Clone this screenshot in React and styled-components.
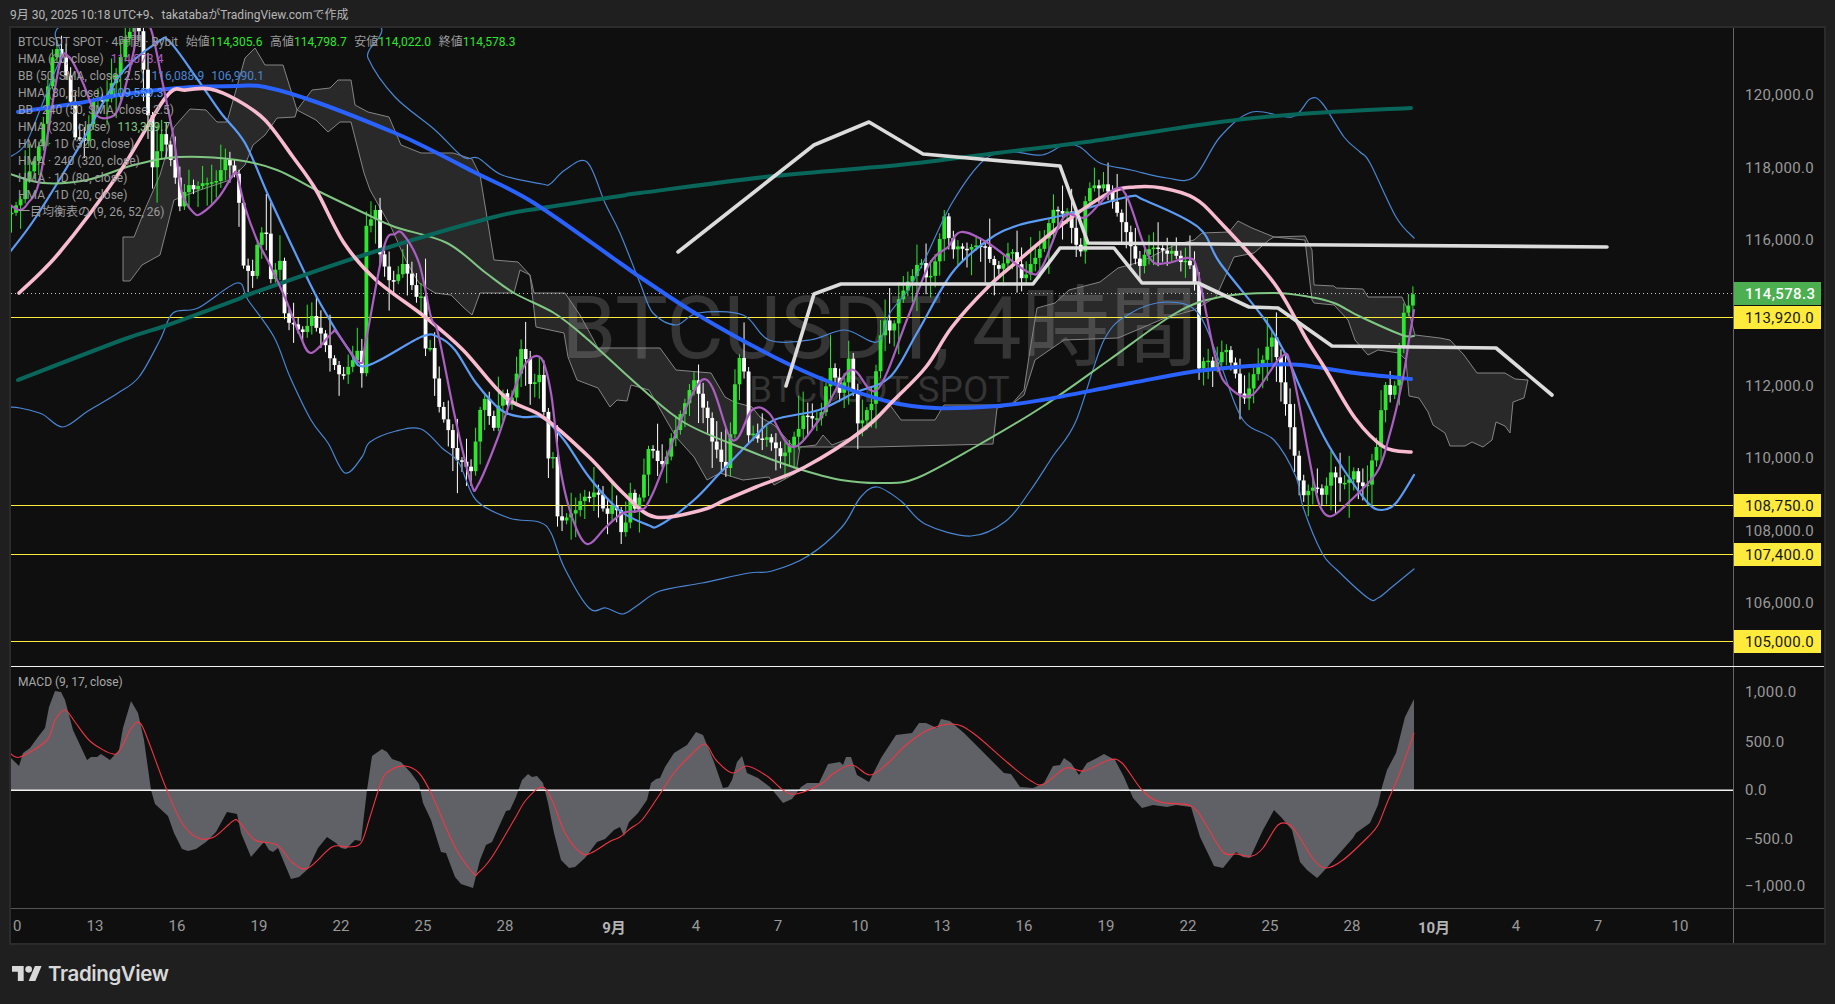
import React from "react";
import styled, { createGlobalStyle } from "styled-components";

const GlobalStyle = createGlobalStyle`
  html, body {
    margin: 0;
    height: 100%;
    background: #1f1f1f;
    overflow: hidden;
  }
`;

const fontStack = `Roboto, "Noto Sans CJK JP", sans-serif`;

const Page = styled.div`
  width: 1835px;
  height: 1004px;
  display: flex;
  flex-direction: column;
  background: #1f1f1f;
  font-family: ${fontStack};
`;

const Header = styled.div`
  height: 26px;
  padding-left: 10px;
  display: flex;
  align-items: center;
  color: #b8b8b8;
  font-size: 12px;
  white-space: nowrap;
`;

const Frame = styled.div`
  width: 1817px;
  margin-left: 9px;
  box-sizing: border-box;
  border: 2px solid #2b2b2b;
  background: #0f0f0f;
  display: flex;
  flex-direction: column;
`;

const MainRow = styled.div`
  display: flex;
  height: 638px;
`;

const Separator = styled.div`
  height: 1px;
  background: #f2f2f2;
`;

const MacdRow = styled.div`
  display: flex;
  height: 241px;
`;

const TimeRow = styled.div`
  display: flex;
  height: 34px;
  border-top: 1px solid #565656;
`;

const Plot = styled.div`
  position: relative;
  width: 1722px;
  flex: none;
  overflow: hidden;
`;

const ChartSvg = styled.svg`
  position: relative;
  display: block;
`;

const PriceAxis = styled.div`
  position: relative;
  flex: 1;
  border-left: 1px solid #666;
`;

const Tick = styled.div`
  position: absolute;
  left: 0;
  width: 87px;
  height: 23px;
  box-sizing: border-box;
  padding-left: 11px;
  display: flex;
  align-items: center;
  font-size: 15px;
  letter-spacing: 0.35px;
  color: ${(p) => p.$color || "#9a9a9a"};
  background: ${(p) => p.$bg || "transparent"};
  font-weight: ${(p) => (p.$strong ? 500 : 400)};
`;

const TimeAxis = styled.div`
  width: 1722px;
  flex: none;
  display: flex;
  align-items: center;
  overflow: hidden;
`;

const TimeTick = styled.div`
  flex: 0 0 ${(p) => p.$w}px;
  margin-left: ${(p) => p.$offset || 0}px;
  text-align: center;
  font-size: 15px;
  color: ${(p) => (p.$strong ? "#b4b4b4" : "#9a9a9a")};
  font-weight: ${(p) => (p.$strong ? 700 : 400)};
`;

const AxisCorner = styled.div`
  flex: 1;
  border-left: 1px solid #666;
`;

const Legend = styled.div`
  position: absolute;
  left: 7px;
  top: 6px;
  display: flex;
  flex-direction: column;
  font-size: 12px;
  color: #9c9c9c;
`;

const LegendRow = styled.div`
  height: 17px;
  line-height: 17px;
  white-space: nowrap;
  display: flex;
  gap: ${(p) => p.$gap || 7}px;
`;

const Value = styled.span`
  color: ${(p) => p.$color};
`;

const MacdLegend = styled.div`
  position: absolute;
  left: 7px;
  top: 8px;
  font-size: 12px;
  color: #a8a8a8;
`;

const Watermark = styled.div`
  position: absolute;
  left: 553px;
  top: 256px;
  width: 631px;
  display: flex;
  flex-direction: column;
  align-items: center;
  color: rgba(255, 255, 255, 0.16);
  white-space: nowrap;
`;

const WatermarkTitle = styled.div`
  font-size: 88px;
  line-height: 88px;
`;

const WatermarkSub = styled.div`
  font-size: 37px;
  line-height: 36px;
`;

const Footer = styled.div`
  flex: 1;
  display: flex;
  align-items: center;
  gap: 6px;
  padding: 0 0 2px 12px;
`;

const Brand = styled.span`
  font-family: Inter, sans-serif;
  font-size: 20.5px;
  font-weight: 600;
  letter-spacing: -0.4px;
  color: #d8d8d8;
`;

// ---- traced data, page coordinates ----

const toPoints = (flat) => {
  const out = [];
  for (let i = 0; i < flat.length; i += 2) out.push([flat[i], flat[i + 1]]);
  return out;
};

const straight = (pts) =>
  pts.map((p, i) => `${i ? "L" : "M"}${p[0]} ${p[1]}`).join(" ");

const smooth = (pts) => {
  let d = `M${pts[0][0]} ${pts[0][1]}`;
  for (let i = 0; i < pts.length - 1; i++) {
    const a = pts[Math.max(i - 1, 0)];
    const b = pts[i];
    const c = pts[i + 1];
    const e = pts[Math.min(i + 2, pts.length - 1)];
    const c1x = b[0] + (c[0] - a[0]) / 6;
    const c1y = b[1] + (c[1] - a[1]) / 6;
    const c2x = c[0] - (e[0] - b[0]) / 6;
    const c2y = c[1] - (e[1] - b[1]) / 6;
    d += ` C${c1x.toFixed(1)} ${c1y.toFixed(1)} ${c2x.toFixed(1)} ${c2y.toFixed(1)} ${c[0]} ${c[1]}`;
  }
  return d;
};

const teal = toPoints([18,380, 122,340, 168,325, 236,300, 253,293, 364,255, 490,218, 542,208, 620,196, 640,193, 774,176, 899,165, 997,153, 1086,142, 1220,122, 1300,114, 1411,108]);
const blue = toPoints([18,112, 79,103, 119,95, 178,88, 237,86, 265,87, 316,102, 395,133, 435,152, 474,172, 534,203, 620,263, 640,277, 698,315, 774,357, 832,383, 890,402, 935,408, 997,406, 1042,400, 1131,383, 1198,371, 1265,365, 1301,365, 1355,373, 1411,379]);
const pink = toPoints([19,293, 59,253, 119,173, 166,97, 186,90, 210,89, 237,100, 265,120, 293,157, 316,190, 344,243, 376,280, 425,317, 463,350, 505,397, 543,417, 589,457, 623,493, 655,517, 702,510, 725,500, 756,487, 805,467, 863,430, 894,400, 926,367, 952,327, 988,287, 1019,260, 1064,223, 1109,193, 1135,187, 1162,188, 1194,198, 1220,222, 1274,283, 1307,340, 1326,370, 1355,418, 1384,447, 1411,452]);
const basis = toPoints([10,252, 36,217, 79,147, 120,75, 158,42, 170,42, 198,80, 221,113, 245,143, 269,197, 300,263, 320,303, 349,350, 366,366, 421,337, 438,337, 455,350, 476,383, 501,410, 522,417, 543,418, 564,440, 589,477, 619,510, 648,525, 660,525, 694,500, 720,473, 752,440, 774,420, 819,410, 854,393, 890,377, 917,333, 952,273, 988,240, 1019,225, 1064,215, 1127,197, 1144,200, 1198,227, 1220,263, 1265,320, 1287,357, 1300,387, 1324,437, 1344,470, 1368,503, 1382,510, 1396,503, 1414,475]);
const upper = toPoints([10,157, 25,145, 40,110, 60,60, 83,20, 360,20, 368,58, 395,97, 435,130, 463,157, 478,158, 502,175, 542,184, 550,184, 565,170, 587,162, 605,203, 620,233, 640,283, 653,313, 676,325, 698,313, 743,315, 769,340, 810,340, 845,330, 877,342, 890,313, 908,290, 926,257, 952,203, 984,160, 1011,152, 1042,155, 1064,145, 1080,147, 1100,163, 1131,170, 1167,178, 1194,177, 1220,137, 1252,112, 1292,117, 1310,99, 1322,103, 1344,137, 1360,152, 1370,163, 1396,217, 1414,238]);
const lower = toPoints([10,407, 20,408, 42,414, 63,427, 88,411, 118,393, 139,377, 160,340, 173,313, 198,308, 237,283, 248,300, 274,337, 290,377, 311,420, 328,443, 345,473, 362,457, 370,442, 396,431, 421,429, 442,448, 459,463, 476,500, 509,518, 539,522, 551,533, 564,567, 589,608, 606,608, 623,614, 638,605, 660,591, 702,583, 749,573, 772,571, 808,556, 842,527, 860,498, 877,487, 901,501, 925,524, 971,536, 1006,521, 1030,491, 1053,456, 1076,421, 1104,340, 1131,313, 1167,302, 1198,313, 1220,363, 1243,420, 1274,440, 1296,477, 1303,507, 1322,553, 1337,570, 1368,598, 1378,598, 1392,587, 1414,569]);
const green = toPoints([10,174, 43,183, 87,180, 134,165, 178,157, 237,160, 277,170, 316,190, 364,213, 395,227, 447,243, 486,273, 514,293, 554,313, 585,337, 640,387, 685,423, 747,450, 796,468, 841,480, 885,483, 917,478, 975,447, 1042,407, 1109,360, 1176,313, 1220,297, 1274,293, 1310,297, 1334,303, 1361,317, 1402,335, 1414,336]);
const whiteA = toPoints([678,252, 814,145, 869,122, 923,154, 1060,166, 1088,243, 1340,245, 1607,247]);
const whiteB = toPoints([786,386, 814,294, 841,284, 1033,284, 1060,248, 1114,248, 1142,283, 1198,283, 1249,307, 1278,308, 1332,346, 1496,348, 1552,395]);
const purple = toPoints([10,205, 20,210, 28,203, 40,178, 59,67, 69,57, 83,83, 95,113, 107,118, 119,107, 134,50, 136,27, 150,27, 162,80, 174,140, 182,193, 194,213, 202,213, 219,197, 233,175, 237,175, 245,207, 257,240, 269,263, 286,300, 299,333, 311,353, 332,333, 337,333, 360,363, 366,340, 384,247, 395,234, 403,234, 419,263, 431,317, 438,333, 455,417, 471,483, 478,485, 497,440, 513,393, 526,363, 541,358, 551,393, 560,467, 572,517, 587,544, 606,527, 623,513, 640,510, 653,493, 702,380, 732,440, 752,410, 769,413, 792,447, 819,420, 850,370, 877,390, 908,317, 930,263, 948,247, 961,232, 988,243, 1028,272, 1042,267, 1064,217, 1086,217, 1113,190, 1127,197, 1149,257, 1167,263, 1189,258, 1198,273, 1216,360, 1229,387, 1252,395, 1281,357, 1292,370, 1314,483, 1322,510, 1332,516, 1348,503, 1377,472, 1389,437, 1402,383, 1409,340, 1414,310]);

const cloudTop = toPoints([123,237, 134,237, 146,207, 160,175, 174,127, 190,109, 206,110, 217,122, 227,122, 245,58, 255,48, 265,65, 283,65, 297,110, 312,90, 330,88, 338,80, 351,80, 355,105, 368,112, 389,117, 401,145, 421,153, 453,153, 472,159, 480,175, 494,260, 518,262, 530,275, 534,293, 565,293, 580,315, 598,348, 660,348, 676,370, 711,373, 725,397, 734,402, 752,407, 760,417, 774,425, 792,445, 800,447, 816,445, 823,435, 832,445, 850,438, 890,405, 901,420, 935,420, 944,405, 997,405, 1011,405, 1024,390, 1030,350, 1037,308, 1055,303, 1069,290, 1100,282, 1118,268, 1140,262, 1175,245, 1194,240, 1202,233, 1229,232, 1238,221, 1252,228, 1274,237, 1305,236, 1312,250, 1314,285, 1334,286, 1336,288, 1363,289, 1368,297, 1402,297, 1409,313, 1415,335, 1440,338, 1450,340, 1464,355, 1477,373, 1505,373, 1515,379, 1528,380]);
const cloudBottom = toPoints([123,281, 130,281, 142,265, 160,255, 174,200, 200,190, 230,180, 245,165, 253,145, 265,135, 277,118, 295,117, 297,110, 316,120, 328,132, 340,122, 351,122, 364,173, 370,190, 391,227, 407,263, 419,283, 435,293, 451,295, 463,307, 472,315, 480,293, 514,293, 520,270, 530,275, 536,327, 564,333, 568,357, 577,380, 598,388, 610,407, 617,400, 627,401, 631,385, 649,390, 676,437, 694,457, 707,480, 720,473, 743,480, 769,477, 774,485, 796,473, 800,447, 816,447, 872,447, 993,444, 997,408, 1011,405, 1024,395, 1035,360, 1064,340, 1118,338, 1144,327, 1165,318, 1194,310, 1216,297, 1234,257, 1254,253, 1269,240, 1274,237, 1305,240, 1312,300, 1314,303, 1334,305, 1348,320, 1355,340, 1368,355, 1378,350, 1399,353, 1406,360, 1409,396, 1419,398, 1428,412, 1433,425, 1445,433, 1450,446, 1465,446, 1472,442, 1483,447, 1492,440, 1496,422, 1505,426, 1510,433, 1513,402, 1524,398, 1528,380]);

const closePath = toPoints([11,213, 20,205, 24,183, 40,147, 51,60, 59,50, 69,83, 73,133, 87,140, 93,100, 105,100, 119,67, 127,33, 138,27, 146,93, 152,167, 162,133, 174,173, 180,207, 186,187, 214,183, 223,163, 233,163, 241,217, 241,267, 253,273, 259,233, 269,233, 271,283, 281,260, 285,323, 304,333, 312,317, 341,380, 358,350, 362,375, 364,230, 378,207, 380,257, 391,283, 403,263, 413,290, 423,300, 424,363, 428,332, 438,403, 442,415, 450,433, 455,455, 461,465, 465,463, 473,472, 478,420, 483,395, 488,408, 492,432, 497,413, 501,388, 509,413, 513,397, 520,347, 524,353, 532,390, 538,367, 543,393, 546,458, 556,457, 556,517, 564,520, 570,517, 581,500, 587,500, 598,490, 606,518, 614,500, 619,520, 624,547, 629,480, 633,513, 642,488, 649,447, 662,467, 680,417, 694,377, 707,417, 711,443, 727,467, 738,352, 747,377, 747,433, 760,437, 774,440, 778,457, 787,453, 805,412, 819,420, 827,385, 832,363, 841,397, 850,352, 856,430, 872,400, 883,320, 892,330, 899,300, 919,260, 930,282, 944,218, 952,250, 984,247, 997,270, 1013,250, 1022,280, 1042,247, 1053,213, 1069,213, 1073,240, 1082,253, 1086,187, 1104,185, 1122,220, 1129,240, 1138,270, 1144,253, 1162,247, 1178,257, 1194,270, 1197,368, 1205,357, 1211,370, 1227,348, 1243,400, 1258,367, 1272,337, 1278,367, 1287,410, 1298,477, 1305,497, 1311,483, 1315,490, 1324,495, 1329,473, 1334,474, 1343,483, 1355,473, 1360,483, 1368,483, 1373,458, 1378,447, 1384,380, 1388,392, 1392,392, 1397,383, 1401,320, 1405,305, 1410,303, 1414,293]);

const closeAt = (x) => {
  const pts = closePath;
  if (x <= pts[0][0]) return pts[0][1];
  for (let i = 1; i < pts.length; i++) {
    if (x <= pts[i][0]) {
      const a = pts[i - 1];
      const b = pts[i];
      return a[1] + ((b[1] - a[1]) * (x - a[0])) / (b[0] - a[0] || 1);
    }
  }
  return pts[pts.length - 1][1];
};

// seeded so the wicks stay the same from run to run
const makeRng = (seed) => () => {
  seed = (seed * 1664525 + 1013904223) % 4294967296;
  return seed / 4294967296;
};

const buildCandles = () => {
  const rng = makeRng(20250930);
  const list = [];
  let prev = closeAt(11);
  for (let x = 11.5; x <= 1414.5; x += 4.55) {
    const close = closeAt(x) + (rng() - 0.5) * 7;
    const top = Math.min(prev, close);
    const bottom = Math.max(prev, close);
    list.push({
      x,
      up: close < prev,
      top,
      height: Math.max(bottom - top, 1.5),
      high: top - 3 - rng() * rng() * 36,
      low: bottom + 3 + rng() * rng() * 36,
    });
    prev = close;
  }
  return list;
};

const candles = buildCandles();

const macdArea = toPoints([10,757, 19,766, 23,753, 30,748, 38,737, 45,728, 49,707, 55,691, 61,692, 65,700, 73,730, 87,760, 91,757, 97,757, 101,754, 110,760, 119,750, 123,728, 131,701, 138,713, 144,740, 151,790, 155,804, 168,816, 174,833, 182,849, 188,851, 196,849, 206,842, 216,832, 227,812, 237,814, 241,833, 251,857, 264,842, 269,850, 273,852, 278,848, 291,879, 299,877, 308,869, 318,848, 327,837, 336,843, 341,848, 346,849, 355,840, 361,841, 367,790, 372,756, 382,749, 387,752, 392,759, 401,762, 411,773, 419,784, 423,803, 431,820, 441,852, 446,853, 455,877, 461,884, 473,888, 480,860, 486,845, 492,842, 506,811, 510,810, 516,797, 522,780, 528,774, 532,777, 537,776, 543,783, 548,803, 554,833, 561,860, 569,868, 575,867, 585,858, 597,842, 605,839, 614,830, 620,827, 624,836, 629,822, 638,813, 647,800, 651,783, 656,779, 660,778, 665,767, 674,753, 687,745, 696,732, 703,735, 714,762, 723,788, 728,787, 732,780, 737,762, 742,756, 747,773, 758,778, 770,787, 783,803, 792,799, 801,787, 807,783, 819,783, 828,764, 840,762, 843,765, 846,757, 851,757, 857,775, 869,782, 881,758, 896,735, 912,733, 919,723, 926,723, 937,728, 941,719, 950,721, 964,733, 986,755, 1004,773, 1011,774, 1020,787, 1033,788, 1040,785, 1044,783, 1053,766, 1060,765, 1064,758, 1071,763, 1079,775, 1087,763, 1095,759, 1104,754, 1115,760, 1124,777, 1133,798, 1142,808, 1153,805, 1167,807, 1176,805, 1191,807, 1200,837, 1214,866, 1223,868, 1236,852, 1243,857, 1250,858, 1263,830, 1274,810, 1281,817, 1292,830, 1300,862, 1307,870, 1317,878, 1322,873, 1338,855, 1353,838, 1356,833, 1370,823, 1378,805, 1382,787, 1387,770, 1396,753, 1405,717, 1414,699, 1414,790, 10,790]);
const macdSignal = toPoints([10,753, 20,757, 47,740, 55,720, 65,710, 75,722, 91,742, 113,754, 121,748, 132,727, 140,723, 148,740, 166,788, 182,823, 198,838, 214,837, 233,821, 239,822, 255,840, 277,845, 293,863, 308,868, 332,847, 348,847, 361,843, 370,817, 382,780, 391,770, 405,766, 419,773, 431,793, 455,847, 473,873, 478,873, 492,857, 514,820, 526,800, 542,787, 552,800, 565,833, 581,853, 591,853, 609,842, 620,837, 631,828, 642,820, 658,797, 674,773, 691,755, 705,744, 716,760, 732,773, 747,766, 767,776, 783,790, 796,794, 821,784, 834,773, 852,765, 870,775, 888,763, 906,745, 928,730, 953,724, 973,733, 1008,763, 1031,781, 1044,784, 1066,768, 1084,771, 1109,760, 1122,763, 1142,790, 1160,802, 1191,806, 1205,823, 1223,852, 1236,854, 1252,856, 1263,848, 1278,825, 1290,825, 1300,838, 1314,860, 1326,868, 1343,860, 1368,837, 1378,825, 1387,803, 1401,770, 1414,733]);

const PLOT_TOP = 28;
const MACD_TOP = 667;

// y is the centre of each label, page coordinates
const priceTicks = [
  { y: 95, text: "120,000.0" },
  { y: 168, text: "118,000.0" },
  { y: 240, text: "116,000.0" },
  { y: 293.5, text: "114,578.3", bg: "#4caf50", color: "#fff", strong: true },
  { y: 317.5, text: "113,920.0", bg: "#ffeb3b", color: "#131722" },
  { y: 386, text: "112,000.0" },
  { y: 458, text: "110,000.0" },
  { y: 505.5, text: "108,750.0", bg: "#ffeb3b", color: "#131722" },
  { y: 531, text: "108,000.0" },
  { y: 554.5, text: "107,400.0", bg: "#ffeb3b", color: "#131722" },
  { y: 603, text: "106,000.0" },
  { y: 641.5, text: "105,000.0", bg: "#ffeb3b", color: "#131722" },
];

const macdTicks = [
  { y: 692, text: "1,000.0" },
  { y: 742, text: "500.0" },
  { y: 790, text: "0.0" },
  { y: 839, text: "−500.0" },
  { y: 886, text: "−1,000.0" },
];

const timeTicks = [
  { text: "10", offset: -39 },
  { text: "13" },
  { text: "16" },
  { text: "19" },
  { text: "22" },
  { text: "25" },
  { text: "28" },
  { text: "9月", strong: true, offset: 27 },
  { text: "4" },
  { text: "7" },
  { text: "10" },
  { text: "13" },
  { text: "16" },
  { text: "19" },
  { text: "22" },
  { text: "25" },
  { text: "28" },
  { text: "10月", strong: true },
  { text: "4" },
  { text: "7" },
  { text: "10" },
];

const LEVELS = [317.5, 505.5, 554.5, 641.5];

const CURVES = [
  { pts: upper, color: "#4a86d4", width: 1.2 },
  { pts: lower, color: "#4a86d4", width: 1.2 },
  { pts: basis, color: "#5b9cf6", width: 2.2 },
  { pts: green, color: "#81c784", width: 2 },
  { pts: teal, color: "#08665a", width: 4 },
  { pts: blue, color: "#2962ff", width: 4 },
  { pts: pink, color: "#f8bbd0", width: 3.6 },
  { pts: purple, color: "#ab5fc0", width: 2.2 },
  { pts: whiteA, color: "#dcdcdc", width: 3.6, line: true },
  { pts: whiteB, color: "#dcdcdc", width: 3.6, line: true },
];

const MainChart = () => (
  <ChartSvg width="1722" height="638" viewBox={`11 ${PLOT_TOP} 1722 638`}>
    <path
      d={`${straight(cloudTop)} ${straight([...cloudBottom].reverse()).replace("M", "L")} Z`}
      fill="rgba(255,255,255,0.11)"
      stroke="#858585"
      strokeWidth="1"
    />
    <line x1="11" x2="1733" y1="293.5" y2="293.5" stroke="#c8c8c8" strokeWidth="1" strokeDasharray="1 3" />
    {LEVELS.map((y) => (
      <line key={y} x1="11" x2="1733" y1={y} y2={y} stroke="#ffeb3b" strokeWidth="1.2" />
    ))}
    {candles.map((c) => (
      <g key={c.x} fill={c.up ? "#2ee62e" : "#ffffff"}>
        <rect x={c.x - 0.5} y={c.high} width="1" height={c.low - c.high} />
        <rect x={c.x - 1.9} y={c.top} width="3.8" height={c.height} />
      </g>
    ))}
    {CURVES.map((c, i) => (
      <path
        key={i}
        d={c.line ? straight(c.pts) : smooth(c.pts)}
        fill="none"
        stroke={c.color}
        strokeWidth={c.width}
        strokeLinecap="round"
        strokeLinejoin="round"
      />
    ))}
  </ChartSvg>
);

const MacdChart = () => (
  <ChartSvg width="1722" height="241" viewBox={`11 ${MACD_TOP} 1722 241`}>
    <path d={`${straight(macdArea)} Z`} fill="#606166" />
    <line x1="11" x2="1733" y1="790.3" y2="790.3" stroke="#f2f2f2" strokeWidth="1.5" />
    <path d={smooth(macdSignal)} fill="none" stroke="#f23645" strokeWidth="1.1" />
  </ChartSvg>
);

const TvLogo = () => (
  <svg width="30" height="15" viewBox="0 4 36 18">
    <path d="M14 22H7V11H0V4h14v18zM28 22h-8l7.5-18h8L28 22z" fill="#d8d8d8" />
    <circle cx="20" cy="8" r="4" fill="#d8d8d8" />
  </svg>
);

const App = () => (
  <Page>
    <GlobalStyle />
    <Header>9月 30, 2025 10:18 UTC+9、takatabaがTradingView.comで作成</Header>
    <Frame>
      <MainRow>
        <Plot>
          <Watermark>
            <WatermarkTitle>BTCUSDT, 4時間</WatermarkTitle>
            <WatermarkSub>BTCUSDT SPOT</WatermarkSub>
          </Watermark>
          <MainChart />
          <Legend>
            <LegendRow $gap={7.6}>
              <span>BTCUSDT SPOT · 4時間 · Bybit</span>
              <span>始値<Value $color="#2ee62e">114,305.6</Value></span>
              <span>高値<Value $color="#2ee62e">114,798.7</Value></span>
              <span>安値<Value $color="#2ee62e">114,022.0</Value></span>
              <span>終値<Value $color="#2ee62e">114,578.3</Value></span>
            </LegendRow>
            <LegendRow>
              <span>HMA (20, close)</span>
              <Value $color="#ab5fc0">114,073.4</Value>
            </LegendRow>
            <LegendRow>
              <span>BB (50, SMA, close, 2.5)</span>
              <Value $color="#4a86d4">116,088.9</Value>
              <Value $color="#4a86d4">106,990.1</Value>
            </LegendRow>
            <LegendRow>
              <span>HMA (80, close)</span>
              <Value $color="#5b9cf6">109,559.3</Value>
            </LegendRow>
            <LegendRow>BB · 240 (50, SMA, close, 2.5)</LegendRow>
            <LegendRow>
              <span>HMA (320, close)</span>
              <Value $color="#81c784">113,389.7</Value>
            </LegendRow>
            <LegendRow>HMA · 1D (320, close)</LegendRow>
            <LegendRow>HMA · 240 (320, close)</LegendRow>
            <LegendRow>HMA · 1D (80, close)</LegendRow>
            <LegendRow>HMA · 1D (20, close)</LegendRow>
            <LegendRow>一目均衡表の (9, 26, 52, 26)</LegendRow>
          </Legend>
        </Plot>
        <PriceAxis>
          {priceTicks.map((t) => (
            <Tick
              key={t.text}
              $bg={t.bg}
              $color={t.color}
              $strong={t.strong}
              style={{ top: t.y - PLOT_TOP - 11.5 }}
            >
              {t.text}
            </Tick>
          ))}
        </PriceAxis>
      </MainRow>
      <Separator />
      <MacdRow>
        <Plot>
          <MacdChart />
          <MacdLegend>MACD (9, 17, close)</MacdLegend>
        </Plot>
        <PriceAxis>
          {macdTicks.map((t) => (
            <Tick key={t.text} style={{ top: t.y - MACD_TOP - 11.5 }}>
              {t.text}
            </Tick>
          ))}
        </PriceAxis>
      </MacdRow>
      <TimeRow>
        <TimeAxis>
          {timeTicks.map((t, i) => (
            <TimeTick key={i} $w={82} $offset={t.offset} $strong={t.strong}>
              {t.text}
            </TimeTick>
          ))}
        </TimeAxis>
        <AxisCorner />
      </TimeRow>
    </Frame>
    <Footer>
      <TvLogo />
      <Brand>TradingView</Brand>
    </Footer>
  </Page>
);

export default App;
